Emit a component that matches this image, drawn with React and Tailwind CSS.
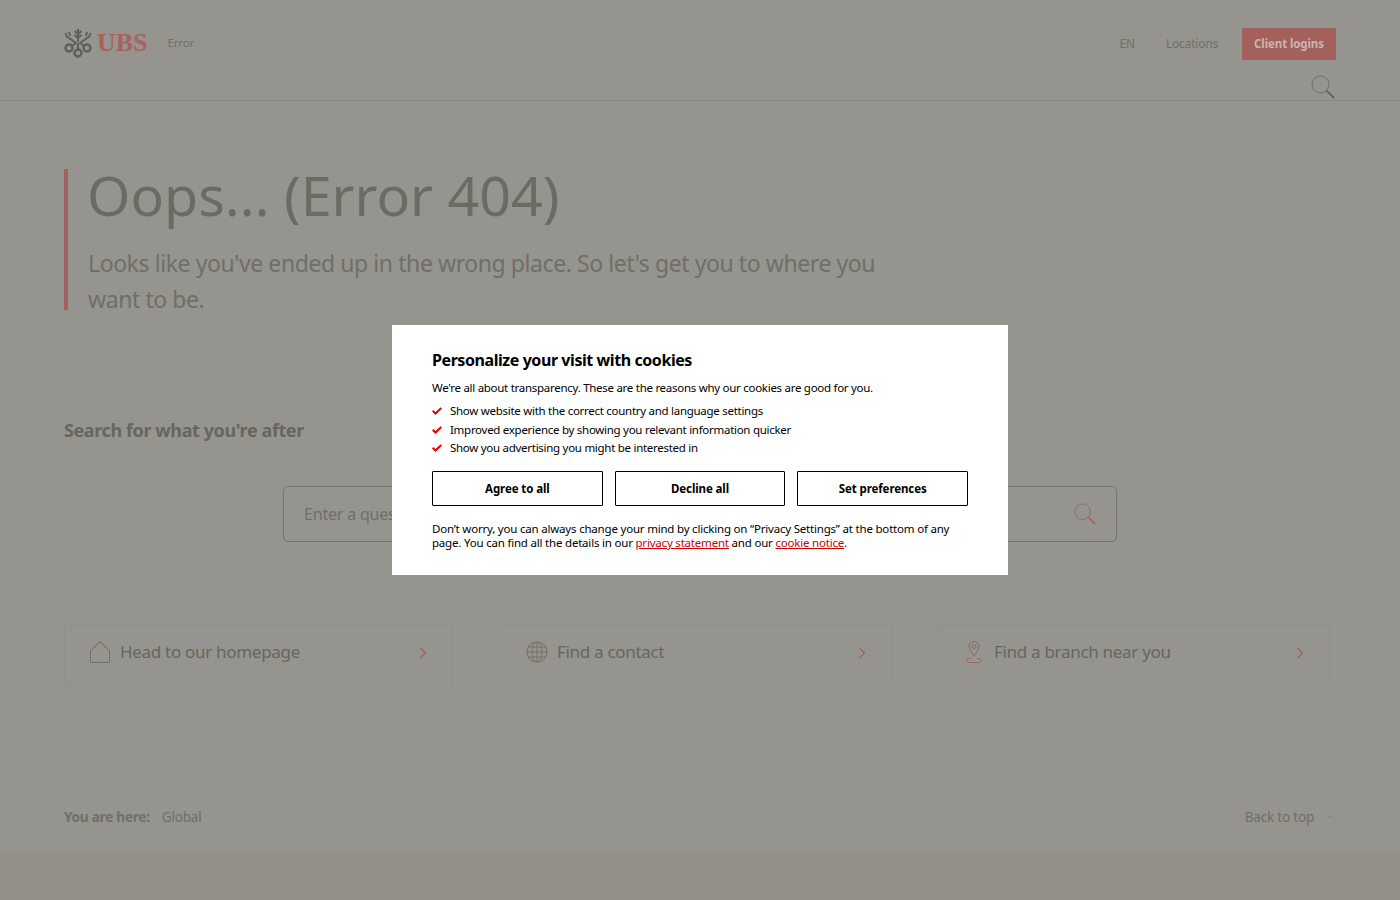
import { ChevronRight, ChevronUp } from 'lucide-react'

const font = { fontFamily: '"Noto Sans", sans-serif' }

function UbsKeys() {
  return (
    <svg width="28" height="30" viewBox="0 0 28 30" fill="none" stroke="#5f5f59" strokeWidth="2">
      <path d="M14 1v13M10.500 3l3.500 3 3.500-3M10.500 7l3.500 3 3.500-3" />
      <path d="M2 8l10 7M1.500 5l1.500 4.500M5 4l1 4" />
      <path d="M26 8l-10 7M26.500 5l-1.500 4.500M23 4l-1 4" />
      <path d="M12.500 15l-5 3M15.500 15l5 3M14 15v7" />
      <circle cx="5" cy="20" r="3.500" strokeWidth="2.400" />
      <circle cx="23" cy="20" r="3.500" strokeWidth="2.400" />
      <circle cx="14" cy="25" r="3.500" strokeWidth="2.400" />
    </svg>
  )
}

function SearchIcon({ className, ring = '#6f6f68', handle = '#63635d' }) {
  return (
    <svg className={className} viewBox="0 0 24 24" fill="none" strokeWidth="1">
      <circle cx="9.500" cy="9.500" r="8.500" stroke={ring} />
      <path d="M15.500 15.500L23 23" stroke={handle} strokeWidth="1.800" />
    </svg>
  )
}

function HomeIcon() {
  return (
    <svg width="22" height="24" viewBox="0 0 22 24" fill="none" stroke="#6f6f68">
      <path d="M1.500 10.500L11 1.500l9.500 9v12h-19z" />
      <path d="M1.500 10.500L11 1.500l9.500 9" stroke="#96675f" />
    </svg>
  )
}

function GlobeIcon() {
  return (
    <svg width="22" height="22" viewBox="0 0 22 22" fill="none" stroke="#6f6f68" strokeWidth="0.900">
      <circle cx="11" cy="11" r="10" stroke="#8a6f68" strokeWidth="1.200" />
      <ellipse cx="11" cy="11" rx="5" ry="10" />
      <path d="M11 1v20M1 11h20M2.500 6h17M2.500 16h17" />
    </svg>
  )
}

function PinIcon() {
  return (
    <svg width="16" height="24" viewBox="0 0 16 24" fill="none" stroke="#96675f">
      <path d="M8 16C5.500 12 3 9.500 3 6.500a5 5 0 0 1 10 0c0 3-2.500 5.500-5 9.500z" stroke="#77706a" />
      <circle cx="8" cy="6.500" r="2" />
      <path d="M5 18.500H2.500c-2 0-2 4 0 4h11c2 0 2-4 0-4H11" />
    </svg>
  )
}

function LinkCard({ icon, label, className }) {
  return (
    <a className={`flex h-[62px] items-center rounded-[2px] border border-[#90908a] pb-[6px] pl-6 pr-[19px] ${className}`}>
      <span className="flex w-[22px] justify-center">{icon}</span>
      <span className="ml-[9px] flex-1 text-[17px] tracking-[-0.3px] text-[#66665f]">{label}</span>
      <ChevronRight className="mt-[2px] h-5 w-5 text-[#a3605c]" strokeWidth={1.300} />
    </a>
  )
}

function CookieModal() {
  const reasons = [
    'Show website with the correct country and language settings',
    'Improved experience by showing you relevant information quicker',
    'Show you advertising you might be interested in',
  ]
  return (
    <div className="fixed inset-0 flex items-center justify-center">
      <div className="h-[250px] w-[616px] bg-white px-10 pt-6 text-[11.500px] leading-[14px] tracking-[-0.28px] text-black">
        <h2 className="text-[16px] leading-[22px] font-bold tracking-[-0.43px]">Personalize your visit with cookies</h2>
        <p className="mt-[9px] leading-4">We're all about transparency. These are the reasons why our cookies are good for you.</p>
        <ul className="mt-[6px]">
          {reasons.map(r => (
            <li key={r} className="flex h-[18.500px] items-center">
              <svg width="10" height="8" viewBox="0 0 10 8" fill="none" stroke="#e60000" strokeWidth="2">
                <path d="M0.700 3.800L3.500 6.500L9.300 1" />
              </svg>
              <span className="ml-2">{r}</span>
            </li>
          ))}
        </ul>
        <div className="mt-[13.500px] flex gap-3">
          {['Agree to all', 'Decline all', 'Set preferences'].map(b => (
            <button key={b} className="h-[35px] flex-1 rounded-[1px] border border-black bg-white text-[11.500px] font-bold tracking-[-0.1px]">{b}</button>
          ))}
        </div>
        <p className="mt-4 tracking-[-0.2px]">
          Don’t worry, you can always change your mind by clicking on “Privacy Settings” at the bottom of any page. You can find all the details in our{' '}
          <a className="text-[#cc0000] underline">privacy statement</a> and our <a className="text-[#cc0000] underline">cookie notice</a>.
        </p>
      </div>
    </div>
  )
}

export default function App() {
  return (
    <div className="flex h-[900px] flex-col overflow-hidden bg-[#95948e]" style={font}>
      <header className="h-[101px] border-b border-[#88887f] px-16">
        <div className="flex items-start justify-between pt-7">
          <div className="flex items-center">
            <UbsKeys />
            <span className="ml-[5px] text-[26px] leading-[28px] font-bold text-[#a8625c]" style={{ fontFamily: '"Liberation Serif", serif' }}>UBS</span>
            <span className="ml-[20px] text-[11.500px] tracking-[-0.2px] text-[#6f6f68]">Error</span>
          </div>
          <div className="flex items-center text-[12px] tracking-[-0.2px] text-[#6f6f68]">
            <span>EN</span>
            <span className="ml-[31px]">Locations</span>
            <button className="ml-6 h-8 w-[94px] rounded-[2px] bg-[#a3605c] pb-[1px] text-[11.500px] font-bold tracking-[-0.1px] text-[#c9b5ae]">Client logins</button>
          </div>
        </div>
        <div className="mt-[15px] flex justify-end">
          <SearchIcon className="mr-[1px] h-6 w-6" />
        </div>
      </header>

      <main className="flex-1 px-16">
        <section className="mt-[68px] h-[141px] border-l-4 border-[#a3605c] pl-5">
          <h1 className="-ml-[1px] text-[55.600px] leading-[52px] text-[#6b6b64]">Oops... (Error 404)</h1>
          <p className="mt-6 w-[830px] text-[23px] leading-9 tracking-[-0.42px] text-[#6f6f68]">Looks like you've ended up in the wrong place. So let's get you to where you want to be.</p>
        </section>

        <h3 className="mt-[108px] text-[18px] leading-6 font-bold tracking-[-0.4px] text-[#66665f]">Search for what you're after</h3>

        <div className="mt-[44px] ml-[219px] flex h-14 w-[834px] items-center justify-between rounded-[5px] border border-[#74746d] pl-5 pr-[20px]">
          <span className="text-[16px] tracking-[-0.2px] text-[#6f6f68]">Enter a question or keyword</span>
          <SearchIcon className="h-[22px] w-[22px]" ring="#8a6f68" handle="#a8625c" />
        </div>

        <div className="mt-[82px] flex">
          <LinkCard icon={<HomeIcon />} label="Head to our homepage" className="w-[389px]" />
          <LinkCard icon={<GlobeIcon />} label="Find a contact" className="ml-[48px] w-[391px]" />
          <LinkCard icon={<PinIcon />} label="Find a branch near you" className="ml-[46px] w-[392px]" />
        </div>

        <div className="mt-[121px] flex items-center justify-between text-[13.500px] leading-5 tracking-[-0.2px] text-[#6f6f68]">
          <div>
            <span className="font-bold">You are here:</span>
            <span className="ml-3">Global</span>
          </div>
          <div className="flex items-center">
            <span>Back to top</span>
            <ChevronUp className="ml-[10px] h-3 w-3 text-[#77776f]" strokeWidth={1.400} />
          </div>
        </div>
      </main>

      <div className="h-[48px] bg-[#948f88]" />
      <CookieModal />
    </div>
  )
}
